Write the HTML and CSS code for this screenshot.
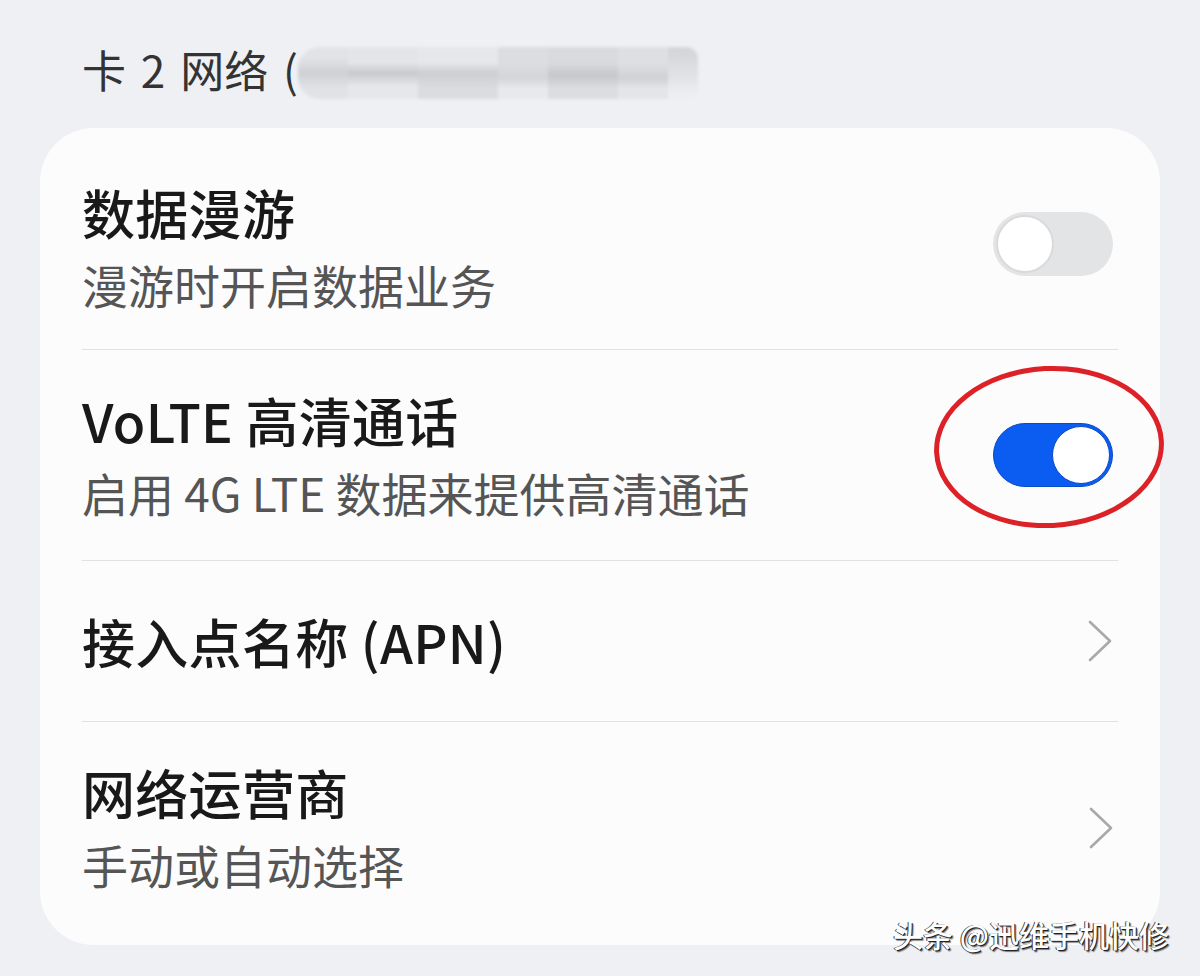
FILE: index.html
```html
<!DOCTYPE html>
<html lang="zh-CN">
<head>
<meta charset="utf-8">
<title>卡 2 网络</title>
<link rel="stylesheet" href="styles.css">
</head>
<body>
<div class="page">
  <header class="section-head">
    <span class="section-title">卡 2 网络 (</span>
    <span class="redacted" aria-hidden="true">
      <span class="px p1"></span><span class="px p2"></span><span class="px p3"></span><span class="px p4"></span><span class="px p5"></span><span class="px p6"></span><span class="px p7"></span>
    </span>
  </header>

  <section class="card">
    <div class="row two-line">
      <div class="texts">
        <div class="title">数据漫游</div>
        <div class="subtitle">漫游时开启数据业务</div>
      </div>
      <div class="toggle off"><span class="knob"></span></div>
    </div>

    <div class="row two-line tall">
      <div class="texts">
        <div class="title">VoLTE 高清通话</div>
        <div class="subtitle">启用 4G LTE 数据来提供高清通话</div>
      </div>
      <div class="toggle on">
        <span class="knob"></span>
        <span class="mark-ellipse"></span>
      </div>
    </div>

    <div class="row one-line">
      <div class="texts">
        <div class="title">接入点名称 (APN)</div>
      </div>
      <svg class="chevron" width="26" height="44" viewBox="0 0 26 44"><polyline points="3,3 23,22 3,41" fill="none" stroke="#a9a9ab" stroke-width="2.6" stroke-linecap="round" stroke-linejoin="round"/></svg>
    </div>

    <div class="row two-line last">
      <div class="texts">
        <div class="title">网络运营商</div>
        <div class="subtitle">手动或自动选择</div>
      </div>
      <svg class="chevron" width="26" height="44" viewBox="0 0 26 44"><polyline points="3,3 23,22 3,41" fill="none" stroke="#a9a9ab" stroke-width="2.6" stroke-linecap="round" stroke-linejoin="round"/></svg>
    </div>
  </section>

  <div class="watermark">头条 @迅维手机快修</div>
</div>
</body>
</html>
```

FILE: styles.css
```css
html, body {
  margin: 0;
  padding: 0;
}
body {
  background: #eef0f4;
  font-family: "Noto Sans CJK SC", "Noto Sans", sans-serif;
  color: #1b1b1b;
  width: 1200px;
  height: 976px;
  overflow: hidden;
}
.page {
  position: relative;
  width: 1200px;
  height: 976px;
}
.section-head {
  height: 128px;
  box-sizing: border-box;
  padding: 39px 0 0 82px;
  display: flex;
  align-items: flex-start;
}
.section-title {
  font-size: 44px;
  line-height: 60px;
  color: #333;
  font-weight: 400;
  word-spacing: 5px;
}
.redacted {
  position: relative;
  display: flex;
  margin-top: 8px;
  margin-left: 0;
  width: 400px;
  height: 52px;
  border-radius: 22px 12px 10px 22px;
  background: linear-gradient(180deg, #e4e5e8 0%, #d3d4d8 40%, #dedfe2 70%, #eceef1 100%);
  filter: blur(1.5px);
  overflow: hidden;
}
.px { display: block; height: 100%; }
.p1 { width: 50px; background: linear-gradient(180deg, #e2e3e6 20%, #cfd0d3 50%, #e1e2e5 80%); }
.p2 { width: 70px; background: linear-gradient(180deg, #e4e5e8 30%, #c8c9cd 50%, #e6e7ea 75%); }
.p3 { width: 80px; background: linear-gradient(180deg, #e6e7ea 30%, #cdced2 50%, #dbdcdf 80%); }
.p4 { width: 50px; background: linear-gradient(180deg, #dcdde0 30%, #d4d5d8 60%, #e8e9ec 80%); }
.p5 { width: 70px; background: linear-gradient(180deg, #d9dade 30%, #c6c7cb 55%, #dcdde0 80%); }
.p6 { width: 50px; background: linear-gradient(180deg, #dedfe2 30%, #d0d1d4 60%, #e4e5e8 80%); }
.p7 { width: 30px; background: linear-gradient(180deg, #d5d6d9 10%, #e2e3e6 60%, #eceef1 90%); }

.card {
  margin: 0 40px;
  background: #fcfcfd;
  border-radius: 54px;
  padding: 14px 42px 14px 42px;
  box-sizing: border-box;
  height: 817px;
}
.row {
  display: flex;
  align-items: center;
  justify-content: space-between;
  border-bottom: 1px solid #e0e1e4;
  box-sizing: border-box;
}
.row.last { border-bottom: none; }
.row.two-line { padding: 39px 5px 34px 0; }
.row.two-line.tall { padding-bottom: 37px; }
.row.one-line { padding: 49px 6px 49px 0; }
.texts { display: flex; flex-direction: column; }
.title {
  font-size: 53px;
  line-height: 62px;
  font-weight: 500;
  color: #191919;
  letter-spacing: 0.3px;
}
.subtitle {
  font-size: 46px;
  line-height: 62px;
  margin-top: 10px;
  color: #555;
  font-weight: 400;
}
.toggle {
  position: relative;
  width: 120px;
  height: 64px;
  border-radius: 32px;
  box-sizing: border-box;
  flex: none;
}
.toggle.off {
  background: #e3e4e6;
  margin-top: -8px;
}
.toggle.on {
  background: #0b5cf0;
  border: 1.5px solid #0a49c8;
  margin-top: -2px;
}
.knob {
  position: absolute;
  top: 3px;
  width: 58px;
  height: 58px;
  border-radius: 50%;
  background: #fff;
  box-sizing: border-box;
}
.toggle.off .knob {
  left: 3px;
  border: 2px solid #d9dadc;
}
.toggle.on .knob {
  right: 2px;
  top: 2px;
  border: 1px solid #0a49c8;
}
.mark-ellipse {
  position: absolute;
  left: -60px;
  top: -58px;
  width: 230px;
  height: 162px;
  border: 5px solid #dc2127;
  border-radius: 50%;
  box-sizing: border-box;
  transform: rotate(-3deg);
}
.chevron {
  flex: none;
  margin-right: -1px;
}
.watermark {
  position: absolute;
  left: 893px;
  top: 914px;
  font-size: 30px;
  line-height: 40px;
  color: #fff;
  font-weight: 500;
  text-shadow: 1px 1px 0 #222, -1px 0 0 #444, 2px 2px 1px rgba(0,0,0,0.5);
  white-space: nowrap;
}
```
